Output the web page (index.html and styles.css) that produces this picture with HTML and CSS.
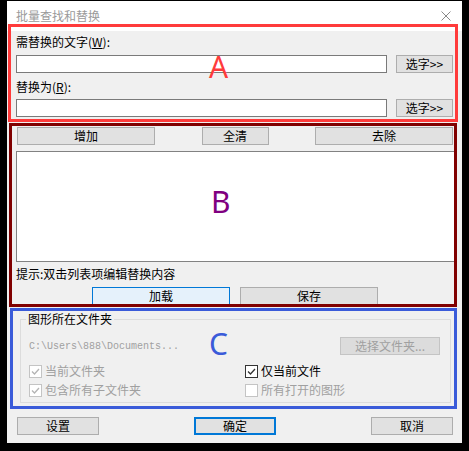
FILE: index.html
```html
<!DOCTYPE html>
<html lang="zh-CN">

<head>
    <meta charset="UTF-8">
    <title>批量查找和替换</title>
    <link rel="stylesheet" href="styles.css">
</head>

<body>
    <div class="window">
        <div class="titlebar">
            <span class="title">批量查找和替换</span>
            <svg class="close" viewBox="0 0 10 10" width="10" height="10">
                <path d="M0.5 0.5 L9.5 9.5 M9.5 0.5 L0.5 9.5" stroke="#8a8a8a" stroke-width="1" fill="none" />
            </svg>
        </div>

        <div class="content">
            <!-- find / replace text -->
            <div class="label label-first">需替换的文字(<u>W</u>):</div>
            <div class="field-row">
                <div class="textbox"></div>
                <button class="btn btn-pick">选字&gt;&gt;</button>
            </div>
            <div class="label label-second">替换为(<u>R</u>):</div>
            <div class="field-row field-row-second">
                <div class="textbox"></div>
                <button class="btn btn-pick">选字&gt;&gt;</button>
            </div>

            <!-- replace list -->
            <div class="list-tools">
                <button class="btn btn-wide">增加</button>
                <button class="btn btn-mid">全清</button>
                <button class="btn btn-wide">去除</button>
            </div>
            <div class="listbox"></div>
            <div class="hint">提示:双击列表项编辑替换内容</div>
            <div class="io-row">
                <button class="btn btn-wide btn-hot">加载</button>
                <button class="btn btn-wide">保存</button>
            </div>

            <!-- drawing folder -->
            <fieldset class="folder-group">
                <legend>图形所在文件夹</legend>
                <div class="path-row">
                    <span class="path">C:\Users\888\Documents...</span>
                    <button class="btn btn-browse" disabled>选择文件夹...</button>
                </div>
                <div class="checks">
                    <label class="check is-disabled">
                        <span class="box"><svg viewBox="0 0 11 11" width="11" height="11"><path d="M2 5.5 L4.5 8 L9 3" /></svg></span>
                        当前文件夹
                    </label>
                    <label class="check">
                        <span class="box"><svg viewBox="0 0 11 11" width="11" height="11"><path d="M2 5.5 L4.5 8 L9 3" /></svg></span>
                        仅当前文件
                    </label>
                    <label class="check is-disabled">
                        <span class="box"><svg viewBox="0 0 11 11" width="11" height="11"><path d="M2 5.5 L4.5 8 L9 3" /></svg></span>
                        包含所有子文件夹
                    </label>
                    <label class="check is-disabled">
                        <span class="box"></span>
                        所有打开的图形
                    </label>
                </div>
            </fieldset>

            <div class="footer">
                <button class="btn btn-small">设置</button>
                <button class="btn btn-small btn-default">确定</button>
                <button class="btn btn-small">取消</button>
            </div>
        </div>

        <!-- annotation frames -->
        <div class="mark mark-a"></div>
        <div class="mark mark-b"></div>
        <div class="mark mark-c"></div>
        <span class="mark-label label-a">A</span>
        <span class="mark-label label-b">B</span>
        <span class="mark-label label-c">C</span>
    </div>
</body>

</html>
```

FILE: styles.css
```css
* {
    box-sizing: border-box;
}

body {
    margin: 0;
    width: 469px;
    height: 451px;
    overflow: hidden;
    background-color: #000;
    font-family: "Noto Sans CJK SC", sans-serif;
    font-size: 12px;
    color: #000;
}

.window {
    position: relative;
    margin: 1px 0 0 7px;
    width: 455px;
    height: 442px;
    background-color: #f0f0f0;
}

.titlebar {
    height: 30px;
    background-color: #fff;
    display: flex;
    align-items: center;
    padding-left: 9px;
}

.title {
    color: #9a9a9a;
    line-height: 16px;
}

.close {
    margin-left: auto;
    margin-right: 11px;
}

.content {
    display: flex;
    flex-direction: column;
    padding: 0 9px;
}

.label {
    height: 18px;
    line-height: 18px;
}

.label u {
    text-underline-offset: 1px;
}

.label-first {
    margin-top: 2px;
}

.label-second {
    margin-top: 5px;
}

.field-row {
    display: flex;
    gap: 9px;
    height: 18px;
    margin-top: 4px;
}

.field-row-second {
    margin-top: 3px;
}

.textbox {
    width: 371px;
    height: 18px;
    border: 1px solid #7a7a7a;
    background-color: #fff;
}

.btn {
    font: inherit;
    color: #000;
    height: 18px;
    padding: 0;
    line-height: 16px;
    background-color: #e1e1e1;
    border: 1px solid #adadad;
    text-align: center;
}

.btn-pick {
    width: 57px;
}

.btn-wide {
    width: 138px;
}

.btn-mid {
    width: 67px;
}

.btn-small {
    width: 82px;
}

.btn-hot {
    background-color: #e5f1fb;
    border-color: #0078d7;
}

.btn-default {
    border: 2px solid #0078d7;
    line-height: 14px;
}

.btn-browse {
    width: 100px;
    background-color: #dcdcdc;
    border-color: #c4c4c4;
    color: #a0a0a0;
}

.list-tools {
    display: flex;
    justify-content: space-between;
    padding-left: 1px;
    margin-top: 10px;
}

.listbox {
    margin-top: 6px;
    margin-right: -3px;
    height: 111px;
    border: 1px solid #828282;
    background-color: #fff;
}

.hint {
    margin-top: 3px;
    line-height: 18px;
}

.io-row {
    display: flex;
    gap: 10px;
    padding-left: 76px;
    margin-top: 4px;
}

.folder-group {
    margin: 7px 0 0 4px;
    width: 431px;
    height: 91px;
    padding: 0 10px 0 8px;
    border: 1px solid #dcdcdc;
    min-width: 0;
}

.folder-group legend {
    padding: 0 2px;
    margin-left: -3px;
    line-height: 14px;
}

.path-row {
    display: flex;
    align-items: center;
    justify-content: space-between;
    height: 18px;
    margin-top: 11px;
}

.path {
    font-family: "Liberation Mono", monospace;
    font-size: 10px;
    color: #a0a0a0;
}

.checks {
    display: grid;
    grid-template-columns: 216px auto;
    row-gap: 1px;
    margin-top: 7px;
}

.check {
    display: flex;
    align-items: center;
    gap: 3px;
    height: 18px;
    line-height: 18px;
}

.box {
    width: 13px;
    height: 13px;
    border: 1px solid #333;
    background-color: #fff;
    display: flex;
}

.box path {
    fill: none;
    stroke: #333;
    stroke-width: 1.3;
}

.check.is-disabled {
    color: #a0a0a0;
}

.check.is-disabled .box {
    border-color: #c4c4c4;
}

.check.is-disabled .box path {
    stroke: #b4b4b4;
}

.footer {
    display: flex;
    justify-content: space-between;
    padding-left: 1px;
    margin-top: 14px;
}

/* annotation overlays */
.mark {
    position: absolute;
    border: 3px solid;
}

.mark-a {
    left: 1px;
    top: 23px;
    width: 450px;
    height: 98px;
    border-color: #ff3b3b;
}

.mark-b {
    left: 2px;
    top: 122px;
    width: 448px;
    height: 184px;
    border-color: #800000;
}

.mark-c {
    left: 3px;
    top: 307px;
    width: 447px;
    height: 101px;
    border-color: #3a5bd9;
}

.mark-label {
    position: absolute;
    font-family: "Noto Sans", sans-serif;
    font-size: 30px;
    line-height: 30px;
}

.label-a {
    left: 202px;
    top: 51px;
    color: #ff3b3b;
}

.label-b {
    left: 204px;
    top: 186px;
    color: #800080;
}

.label-c {
    left: 202px;
    top: 328px;
    color: #3a5bd9;
}
```
